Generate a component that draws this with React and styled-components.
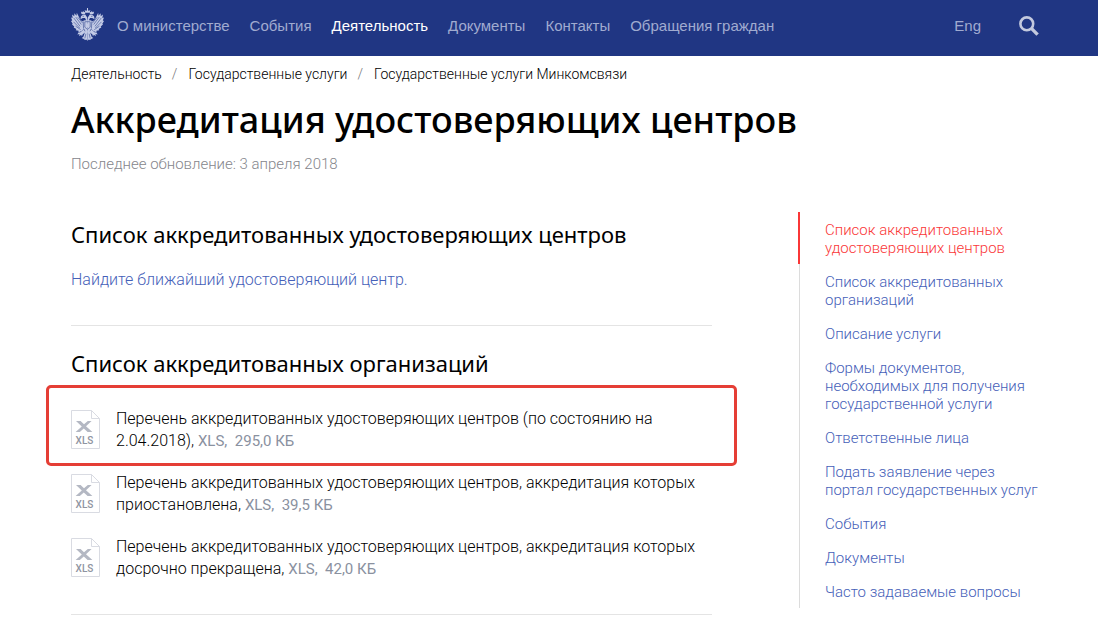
import React from "react";
import styled, { createGlobalStyle } from "styled-components";

const menu = ["О министерстве", "События", "Деятельность", "Документы", "Контакты", "Обращения граждан"];

const crumbs = ["Деятельность", "Государственные услуги", "Государственные услуги Минкомсвязи"];

const files = [
    { name: "Перечень аккредитованных удостоверяющих центров (по состоянию на 2.04.2018)", size: "295,0 КБ", marked: true },
    { name: "Перечень аккредитованных удостоверяющих центров, аккредитация которых приостановлена", size: "39,5 КБ" },
    { name: "Перечень аккредитованных удостоверяющих центров, аккредитация которых досрочно прекращена", size: "42,0 КБ" },
];

const sections = [
    "Список аккредитованных удостоверяющих центров",
    "Список аккредитованных организаций",
    "Описание услуги",
    "Формы документов, необходимых для получения государственной услуги",
    "Ответственные лица",
    "Подать заявление через портал государственных услуг",
    "События",
    "Документы",
    "Часто задаваемые вопросы",
];

// Левая половина герба, правая получается отражением
const EagleHalf = () => (
    <g>
        <path d="M15 12.5 L13.6 9.6 L11.4 9.6 L9.2 10.8 L9.6 8.2 L11.4 6.4 L13.8 6.4 L15.6 9 L16 12 Z" />
        <path d="M10.2 5.8 L9.6 3.4 L11 4.2 L11.8 2.8 L12.8 4.2 L14.2 3.4 L13.6 5.8 Z" />
        <path d="M9 11.4 L7.6 8.4 L5.6 4.6 L5.4 7.6 L3.2 5 L3.2 8 L1 6.4 L1.6 9.6 L0 9.2 L1.2 12.2 L0 12.6 L1.6 15.2 L1 16 L3.2 18 L2.6 19 L5.2 20.4 L4.6 21.6 L7.4 22 L7.2 23.4 L10 22.6 L12.6 20 L12.4 12.8 L10.8 12.8 Z" />
        <path d="M12.4 20.6 L9.2 23.4 L7.2 23.8 L6.2 25.8 L8.2 25.2 L8 27.4 L9.8 26 L10.6 27.4 L11.4 25.4 L14 23.4 Z" />
        <path d="M14 22 L12 27.8 L10.4 29 L12.4 30 L13.6 31 L14.8 30.6 L16 31.8 L16 22 Z" />
        <path d="M12.2 12.2 L16 11.6 L16 24 L14 22.6 L12.2 19.6 Z" />
        <g fill="none" stroke="#203683" strokeWidth="0.5">
            <path d="M2.6 9.6 L8.8 17.8" />
            <path d="M4.6 8.8 L10 16" />
            <path d="M6.6 9 L11 14.4" />
            <path d="M2.4 13.4 L8.4 19.4" />
            <path d="M4.4 17.6 L9.4 21" />
            <path d="M11.8 13.6 L12.2 20" />
            <path d="M13.4 13.4 L13.4 18.6 L16 20.8" />
            <path d="M13.4 13.4 L16 13.2" />
            <path d="M14.4 25 L13.4 29.4" />
            <path d="M11 7.8 L12.6 8.2" />
        </g>
    </g>
);

const Emblem = () => (
    <svg width="33" height="33" viewBox="0 0 32 32" fill="#c3cbe6" aria-hidden="true">
        <EagleHalf />
        <g transform="translate(32 0) scale(-1 1)">
            <EagleHalf />
        </g>
        <path d="M14 4.6 L13.2 2 L15 2.8 L15.5 1.6 L15.5 0 L16.5 0 L16.5 1.6 L17 2.8 L18.8 2 L18 4.6 Z" />
        <path d="M15.4 14.6 L17 16 L16.6 18.4 L15 18.8 Z" />
    </svg>
);

const SearchGlyph = () => (
    <svg width="20" height="20" viewBox="0 0 20 20" fill="none" stroke="#c3c9de" aria-hidden="true">
        <circle cx="7.8" cy="7.8" r="6.4" strokeWidth="2.6" />
        <path d="M12.4 12.4 L18.6 18.6" strokeWidth="3.4" />
    </svg>
);

const XlsIcon = () => (
    <XlsSvg width="29" height="39" viewBox="0 0 29 39" aria-hidden="true">
        <path d="M0.5 0.5 H20.5 L28.5 8.5 V38.5 H0.5 Z" fill="#fff" stroke="#d9dbe2" />
        <path d="M20.5 0.5 V8.5 H28.5" fill="none" stroke="#d9dbe2" />
        <path d="M5 11 H9.6 L13 14.3 L16.8 11 H20.6 L15 16.2 L21.4 22 H16.6 L12.8 18.6 L8.8 22 H4.6 L10.8 16.6 Z" fill="#b4b8c3" />
        <text x="13.5" y="34" textAnchor="middle">XLS</text>
    </XlsSvg>
);

const App = () => {
    return (
        <>
            <GlobalStyle />
            <Header>
                <Logo href="#" aria-label="Главная">
                    <Emblem />
                </Logo>
                <Nav>
                    {menu.map((item) => (
                        <NavLink key={item} href="#" $active={item === "Деятельность"}>{item}</NavLink>
                    ))}
                </Nav>
                <NavLink href="#">Eng</NavLink>
                <SearchButton type="button" aria-label="Поиск">
                    <SearchGlyph />
                </SearchButton>
            </Header>
            <Page>
                <Breadcrumbs>
                    {crumbs.map((item) => (
                        <Crumb key={item}><CrumbLink href="#">{item}</CrumbLink></Crumb>
                    ))}
                </Breadcrumbs>
                <Title>Аккредитация удостоверяющих центров</Title>
                <Updated>Последнее обновление: 3 апреля 2018</Updated>
                <Columns>
                    <main>
                        <Section>
                            <SectionTitle>Список аккредитованных удостоверяющих центров</SectionTitle>
                            <TextLink href="#">Найдите ближайший удостоверяющий центр.</TextLink>
                        </Section>
                        <Section>
                            <SectionTitle>Список аккредитованных организаций</SectionTitle>
                            <FileList>
                                {files.map((file) => (
                                    <FileItem key={file.name} $marked={file.marked}>
                                        <XlsIcon />
                                        <FileText>
                                            <FileLink href="#">{file.name}</FileLink>, <FileMeta>XLS,&nbsp; {file.size}</FileMeta>
                                        </FileText>
                                    </FileItem>
                                ))}
                            </FileList>
                        </Section>
                    </main>
                    <SideNav>
                        {sections.map((item, index) => (
                            <SideLink key={item} href="#" $active={index === 0}>{item}</SideLink>
                        ))}
                    </SideNav>
                </Columns>
            </Page>
        </>
    );
};

const GlobalStyle = createGlobalStyle`
    * {
        box-sizing: border-box;
    }
    body {
        margin: 0;
        background-color: #fff;
        color: #000;
        font-family: Roboto, "Liberation Sans", sans-serif;
        font-weight: 300;
    }
    a {
        text-decoration: none;
    }
`;

const Header = styled.header`
    display: flex;
    align-items: center;
    height: 56px;
    padding: 0 59px 4px 71px;
    background-color: #203683;
`;

const Logo = styled.a`
    display: flex;
    margin-right: 13px;
    padding-bottom: 4px;
`;

const Nav = styled.nav`
    display: flex;
    flex: 1;
    gap: 20px;
`;

const NavLink = styled.a`
    font-family: "Liberation Sans", sans-serif;
    font-size: 15px;
    font-weight: 400;
    line-height: 20px;
    white-space: nowrap;
    color: ${(props) => (props.$active ? "#fff" : "#a0abd0")};
    :hover {
        color: #fff;
    }
`;

const SearchButton = styled.button`
    display: flex;
    margin-left: 38px;
    padding: 0;
    border: none;
    background: none;
    cursor: pointer;
`;

const Page = styled.div`
    padding: 8px 58px 0 71px;
`;

const Breadcrumbs = styled.nav`
    display: flex;
    font-size: 14px;
    line-height: 20px;
`;

const Crumb = styled.span`
    & + &::before {
        content: "/";
        margin: 0 11px 0 10px;
        color: #777;
    }
`;

const CrumbLink = styled.a`
    color: #000;
`;

const Title = styled.h1`
    margin: 10px 0 0;
    font-family: "Noto Sans", sans-serif;
    font-size: 36px;
    font-weight: 500;
    line-height: 52px;
`;

const Updated = styled.p`
    margin: 8px 0 0;
    font-size: 15px;
    line-height: 20px;
    color: #85868c;
`;

const Columns = styled.div`
    display: grid;
    grid-template-columns: minmax(0, 1fr) 242px;
    gap: 86px;
    align-items: start;
    margin-top: 38px;
`;

const Section = styled.section`
    padding: 7px 0 34px;
    border-bottom: 1px solid #e4e4e4;
    & + & {
        padding-top: 22px;
    }
`;

const SectionTitle = styled.h2`
    margin: 0 0 20px;
    font-family: "Noto Sans", sans-serif;
    font-size: 22px;
    font-weight: 400;
    line-height: 30px;
`;

const TextLink = styled.a`
    display: block;
    font-size: 16px;
    line-height: 22px;
    color: #4560b8;
`;

const FileList = styled.ul`
    display: flex;
    flex-direction: column;
    gap: 18px;
    margin: 28px 0 0;
    padding: 0;
    list-style: none;
`;

const FileItem = styled.li`
    position: relative;
    display: flex;
    align-items: center;
    gap: 16px;
    &::after {
        content: ${(props) => (props.$marked ? '""' : "none")};
        position: absolute;
        inset: -21px -25px -14px;
        border: 3px solid #e53e35;
        border-radius: 5px;
        pointer-events: none;
    }
`;

const XlsSvg = styled.svg`
    flex: none;
    text {
        font-family: Roboto, sans-serif;
        font-size: 10px;
        font-weight: 500;
        fill: #8f94a1;
    }
`;

const FileText = styled.div`
    padding-top: 2px;
    font-size: 16px;
    line-height: 22px;
`;

const FileLink = styled.a`
    color: #000;
`;

const FileMeta = styled.span`
    font-size: 15px;
    font-weight: 400;
    color: #8a919f;
`;

const SideNav = styled.nav`
    display: flex;
    flex-direction: column;
    background: linear-gradient(#dcdcdc, #dcdcdc) 1px 0 / 1px 100% no-repeat;
`;

const SideLink = styled.a`
    padding: 9px 0 7px 25px;
    border-left: 2px solid ${(props) => (props.$active ? "#fa3737" : "transparent")};
    font-size: 15px;
    line-height: 18px;
    color: ${(props) => (props.$active ? "#fa3737" : "#4560b8")};
`;

export default App;
